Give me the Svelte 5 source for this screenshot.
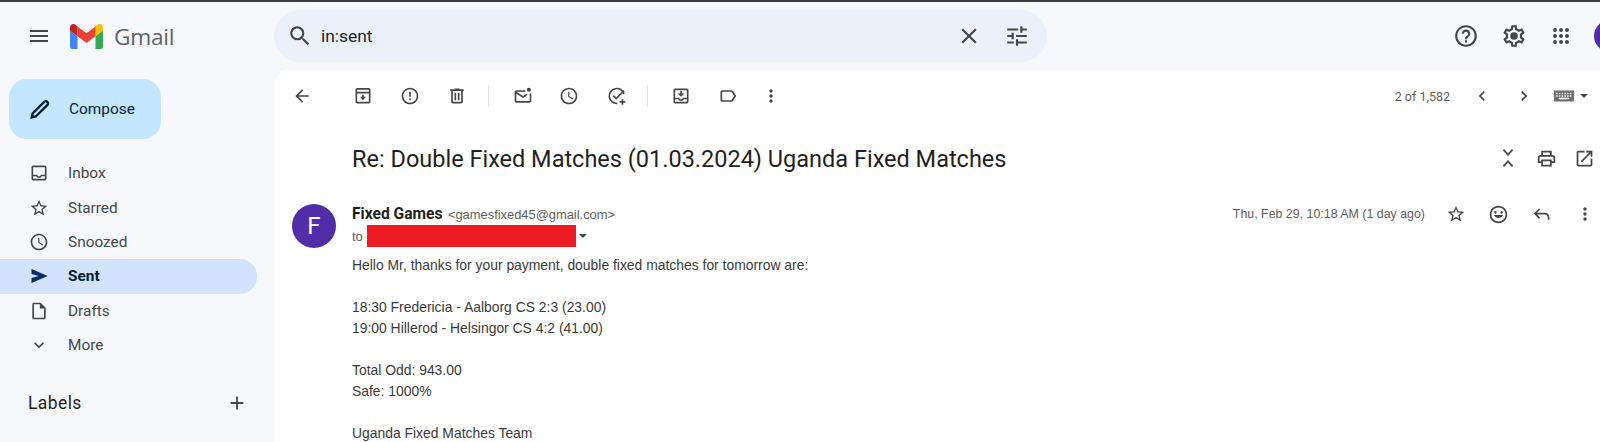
<script>
  const paths = {
    menu: "M3 18h18v-2H3v2zm0-5h18v-2H3v2zm0-7v2h18V6H3z",
    search: "M15.5 14h-.79l-.28-.27C15.41 12.59 16 11.11 16 9.5 16 5.91 13.09 3 9.5 3S3 5.91 3 9.5 5.91 16 9.5 16c1.61 0 3.09-.59 4.23-1.57l.27.28v.79l5 4.99L20.49 19l-4.99-5zm-6 0C7.01 14 5 11.99 5 9.5S7.01 5 9.5 5 14 7.01 14 9.5 11.99 14 9.5 14z",
    close: "M19 6.41L17.59 5 12 10.59 6.41 5 5 6.41 10.59 12 5 17.59 6.41 19 12 13.41 17.59 19 19 17.59 13.41 12z",
    tune: "M3 17v2h6v-2H3zM3 5v2h10V5H3zm10 16v-2h8v-2h-8v-2h-2v6h2zM7 9v2H3v2h4v2h2V9H7zm14 4v-2H11v2h10zm-6-4h2V7h4V5h-4V3h-2v6z",
    help: "M11 18h2v-2h-2v2zm1-16C6.48 2 2 6.48 2 12s4.48 10 10 10 10-4.48 10-10S17.52 2 12 2zm0 18c-4.41 0-8-3.59-8-8s3.59-8 8-8 8 3.59 8 8-3.59 8-8 8zm0-14c-2.21 0-4 1.79-4 4h2c0-1.1.9-2 2-2s2 .9 2 2c0 2-3 1.75-3 5h2c0-2.25 3-2.5 3-5 0-2.21-1.79-4-4-4z",
    gear: "M19.43 12.98c.04-.32.07-.64.07-.98 0-.34-.03-.66-.07-.98l2.11-1.65c.19-.15.24-.42.12-.64l-2-3.46c-.09-.16-.26-.25-.44-.25-.06 0-.12.01-.17.03l-2.49 1c-.52-.4-1.08-.73-1.69-.98l-.38-2.65C14.46 2.18 14.25 2 14 2h-4c-.25 0-.46.18-.49.42l-.38 2.65c-.61.25-1.17.59-1.69.98l-2.49-1c-.06-.02-.12-.03-.18-.03-.17 0-.34.09-.43.25l-2 3.46c-.13.22-.07.49.12.64l2.11 1.65c-.04.32-.07.65-.07.98 0 .33.03.66.07.98l-2.11 1.65c-.19.15-.24.42-.12.64l2 3.46c.09.16.26.25.44.25.06 0 .12-.01.17-.03l2.49-1c.52.4 1.08.73 1.69.98l.38 2.65c.03.24.24.42.49.42h4c.25 0 .46-.18.49-.42l.38-2.65c.61-.25 1.17-.59 1.69-.98l2.49 1c.06.02.12.03.18.03.17 0 .34-.09.43-.25l2-3.46c.12-.22.07-.49-.12-.64l-2.11-1.65zm-1.98-1.71c.04.31.05.52.05.73 0 .21-.02.43-.05.73l-.14 1.13.89.7 1.08.84-.7 1.21-1.27-.51-1.04-.42-.9.68c-.43.32-.84.56-1.25.73l-1.06.43-.16 1.13-.2 1.35h-1.4l-.19-1.35-.16-1.13-1.06-.43c-.43-.18-.83-.41-1.23-.71l-.91-.7-1.06.43-1.27.51-.7-1.21 1.08-.84.89-.7-.14-1.13c-.03-.31-.05-.54-.05-.74s.02-.43.05-.73l.14-1.13-.89-.7-1.08-.84.7-1.21 1.27.51 1.04.42.9-.68c.43-.32.84-.56 1.25-.73l1.06-.43.16-1.13.2-1.35h1.39l.19 1.35.16 1.13 1.06.43c.43.18.83.41 1.23.71l.91.7 1.06-.43 1.27-.51.7 1.21-1.07.85-.89.7.14 1.13z M12 8.5a3.5 3.5 0 1 0 0 7 3.5 3.5 0 0 0 0-7z",
    apps: "M4 6a2 2 0 1 0 4 0 2 2 0 0 0-4 0zm6 0a2 2 0 1 0 4 0 2 2 0 0 0-4 0zm6 0a2 2 0 1 0 4 0 2 2 0 0 0-4 0zM4 12a2 2 0 1 0 4 0 2 2 0 0 0-4 0zm6 0a2 2 0 1 0 4 0 2 2 0 0 0-4 0zm6 0a2 2 0 1 0 4 0 2 2 0 0 0-4 0zM4 18a2 2 0 1 0 4 0 2 2 0 0 0-4 0zm6 0a2 2 0 1 0 4 0 2 2 0 0 0-4 0zm6 0a2 2 0 1 0 4 0 2 2 0 0 0-4 0z",
    inbox: "M19 3H5c-1.1 0-2 .9-2 2v14c0 1.1.9 2 2 2h14c1.1 0 2-.9 2-2V5c0-1.1-.9-2-2-2zm0 16H5v-3h3.56c.69 1.19 1.97 2 3.44 2s2.75-.81 3.44-2H19v3zm0-5h-4.99c0 1.1-.9 2-2 2s-2-.9-2-2H5V5h14v9z",
    star: "M22 9.24l-7.19-.62L12 2 9.19 8.63 2 9.24l5.46 4.73L5.82 21 12 17.27 18.18 21l-1.63-7.03L22 9.24zM12 15.4l-3.76 2.27 1-4.28-3.32-2.88 4.38-.38L12 6.1l1.71 4.04 4.38.38-3.32 2.88 1 4.28L12 15.4z",
    clock: "M11.99 2C6.47 2 2 6.48 2 12s4.47 10 9.99 10C17.52 22 22 17.52 22 12S17.52 2 11.99 2zM12 20c-4.42 0-8-3.58-8-8s3.58-8 8-8 8 3.58 8 8-3.58 8-8 8zm.5-13H11v6l5.25 3.15.75-1.23-4.5-2.67z",
    send: "M3 20.5v-6L11.5 12 3 9.5v-6L22.5 12z",
    draft: "M14 2H6c-1.1 0-1.99.9-1.99 2L4 20c0 1.1.89 2 1.99 2H18c1.1 0 2-.9 2-2V8l-6-6zM6 20V4h7v5h5v11H6z",
    more: "M16.59 8.59L12 13.17 7.41 8.59 6 10l6 6 6-6z",
    add: "M19 13h-6v6h-2v-6H5v-2h6V5h2v6h6v2z",
    back: "M20 11H7.83l5.59-5.59L12 4l-8 8 8 8 1.41-1.41L7.83 13H20v-2z",
    archive: "M5 2.5h14c1.1 0 2 .9 2 2V19c0 1.1-.9 2-2 2H5c-1.1 0-2-.9-2-2V4.5c0-1.1.9-2 2-2zm0 2V7h14V4.5H5zM5 9v10h14V9H5zm6 1.5h2V13h2.5L12 17l-3.5-4H11z",
    spam: "M11 15h2v2h-2zm0-8h2v6h-2zm.99-5C6.47 2 2 6.48 2 12s4.47 10 9.99 10C17.52 22 22 17.52 22 12S17.52 2 11.99 2zM12 20c-4.42 0-8-3.58-8-8s3.58-8 8-8 8 3.58 8 8-3.58 8-8 8z",
    trash: "M15 4V3H9v1H4v2h1v13c0 1.1.9 2 2 2h10c1.1 0 2-.9 2-2V6h1V4h-5zm2 15H7V6h10v13zM9 8h2v9H9zm4 0h2v9h-2z",
    unread: "M20 9v9H4V7h11V5H4c-1.1 0-2 .9-2 2v11c0 1.1.9 2 2 2h16c1.1 0 2-.9 2-2V9h-2zM4 7l8 5 5-3.1v2.3L12 14.4 4 9.4zM19 2a2.5 2.5 0 1 0 0 5 2.5 2.5 0 0 0 0-5z",
    move: "M19 3H5c-1.1 0-2 .9-2 2v14c0 1.1.9 2 2 2h14c1.1 0 2-.9 2-2V5c0-1.1-.9-2-2-2zm0 16H5v-3h3.56c.69 1.19 1.97 2 3.44 2s2.75-.81 3.44-2H19v3zm0-5h-4.99c0 1.1-.9 2-2 2s-2-.9-2-2H5V5h14v9zM11 6h2v3h3l-4 4-4-4h3z",
    label: "M17.63 5.84C17.27 5.33 16.67 5 16 5L5 5.01C3.9 5.01 3 5.9 3 7v10c0 1.1.9 1.99 2 1.99L16 19c.67 0 1.27-.33 1.63-.84L22 12l-4.37-6.16zM16 17H5V7h11l3.55 5L16 17z",
    dots: "M12 8c1.1 0 2-.9 2-2s-.9-2-2-2-2 .9-2 2 .9 2 2 2zm0 2c-1.1 0-2 .9-2 2s.9 2 2 2 2-.9 2-2-.9-2-2-2zm0 6c-1.1 0-2 .9-2 2s.9 2 2 2 2-.9 2-2-.9-2-2-2z",
    left: "M15.41 7.41L14 6l-6 6 6 6 1.41-1.41L10.83 12z",
    right: "M10 6L8.59 7.41 13.17 12l-4.58 4.59L10 18l6-6z",
    keyboard: "M1 6h22v12H1zM3.5 8.5v1.5h1.5V8.5zm3 0v1.5H8V8.5zm3 0v1.5H11V8.5zm3 0v1.5H14V8.5zm3 0v1.5H17V8.5zm3 0v1.5h1.5V8.5zM3.5 11.2v1.5h1.5v-1.5zm3 0v1.5H8v-1.5zm3 0v1.5H11v-1.5zm3 0v1.5H14v-1.5zm3 0v1.5H17v-1.5zm3 0v1.5h1.5v-1.5zM6.5 14v1.5h11V14z",
    print: "M19 8h-1V3H6v5H5c-1.66 0-3 1.34-3 3v6h4v4h12v-4h4v-6c0-1.66-1.34-3-3-3zM8 5h8v3H8V5zm8 12v2H8v-4h8v2zm2-2v-2H6v2H4v-4c0-.55.45-1 1-1h14c.55 0 1 .45 1 1v4h-2z",
    open: "M19 19H5V5h7V3H5c-1.11 0-2 .9-2 2v14c0 1.1.89 2 2 2h14c1.1 0 2-.9 2-2v-7h-2v7zM14 3v2h3.59l-9.83 9.83 1.41 1.41L19 6.41V10h2V3h-7z",
    smile: "M15.5 11c.83 0 1.5-.67 1.5-1.5S16.33 8 15.5 8 14 8.67 14 9.5s.67 1.5 1.5 1.5zm-7 0c.83 0 1.5-.67 1.5-1.5S9.33 8 8.5 8 7 8.67 7 9.5 7.67 11 8.5 11zm3.49-9C6.47 2 2 6.48 2 12s4.47 10 9.99 10C17.52 22 22 17.52 22 12S17.52 2 11.99 2zM12 20c-4.42 0-8-3.58-8-8s3.58-8 8-8 8 3.58 8 8-3.58 8-8 8zm0-4c-2.33 0-4.31-1.46-5.11-3.5h10.22c-.8 2.04-2.78 3.5-5.11 3.5z",
  };

  // these read better as open strokes than as filled outlines
  const strokes = {
    pencil: "M3.8 20.4l.9-4L16.4 4.7a1.9 1.9 0 0 1 2.7 0l.4.4a1.9 1.9 0 0 1 0 2.7L7.8 19.5z",
    task: "M20.4 9.5A9 9 0 1 0 12.5 21M7.5 11.5l3.5 3.5 9.5-9.5M15 19h7M18.5 15.5v7",
    collapse: "M6.5 2l5.5 6 5.5-6M6.5 22l5.5-6 5.5 6",
    reply: "M9 6l-5.5 5.5L9 17M4 11.5h10.5c3 0 5.5 2 5.5 5.5v2",
  };

  const nav = [
    { name: "Inbox", icon: "inbox" },
    { name: "Starred", icon: "star" },
    { name: "Snoozed", icon: "clock" },
    { name: "Sent", icon: "send", active: true },
    { name: "Drafts", icon: "draft" },
    { name: "More", icon: "more" },
  ];

  const body = [
    "Hello Mr, thanks for your payment, double fixed matches for tomorrow are:",
    "",
    "18:30 Fredericia - Aalborg CS 2:3 (23.00)",
    "19:00 Hillerod - Helsingor CS 4:2 (41.00)",
    "",
    "Total Odd: 943.00",
    "Safe: 1000%",
    "",
    "Uganda Fixed Matches Team",
  ];
</script>

{#snippet icon(name, size = 24)}
  <svg class="icon" viewBox="0 0 24 24" width={size} height={size}>
    {#if strokes[name]}
      <path d={strokes[name]} class="stroked" />
    {:else}
      <path d={paths[name]} fill-rule="evenodd" />
    {/if}
  </svg>
{/snippet}

{#snippet tool(name, width, size = 20)}
  <div class="tool" style="width: {width}px">{@render icon(name, size)}</div>
{/snippet}

<div class="page">
  <header class="header">
    <div class="brand">
      <div class="menu-icon">{@render icon("menu", 24)}</div>
      <svg class="logo" viewBox="52 42 88 66" width="33" height="25">
        <path fill="#4285f4" d="M58 108h14V74L52 59v43c0 3.32 2.69 6 6 6" />
        <path fill="#34a853" d="M120 108h14c3.32 0 6-2.69 6-6V59l-20 15" />
        <path fill="#fbbc04" d="M120 48v26l20-15v-8c0-7.42-8.47-11.65-14.4-7.2" />
        <path fill="#ea4335" d="M72 74V48l24 18 24-18v26L96 92" />
        <path fill="#c5221f" d="M52 51v8l20 15V48l-5.6-4.2c-5.94-4.45-14.4-.22-14.4 7.2" />
      </svg>
      <span class="wordmark">Gmail</span>
    </div>
    <div class="search">
      <div class="search-icon">{@render icon("search", 26)}</div>
      <span class="query">in:sent</span>
      <div class="search-end">
        {@render icon("close", 26)}
        {@render icon("tune", 26)}
      </div>
    </div>
    <div class="actions">
      {@render icon("help", 26)}
      {@render icon("gear", 26)}
      {@render icon("apps", 24)}
      <div class="me"></div>
    </div>
  </header>

  <div class="main">
    <aside class="sidebar">
      <button class="compose">
        {@render icon("pencil", 24)}
        <span>Compose</span>
      </button>
      <nav class="nav">
        {#each nav as item}
          <div class="nav-row" class:active={item.active}>
            {@render icon(item.icon, 20)}
            <span>{item.name}</span>
          </div>
        {/each}
      </nav>
      <div class="labels">
        <span>Labels</span>
        {@render icon("add", 22)}
      </div>
    </aside>

    <section class="panel">
      <div class="toolbar">
        {@render tool("back", 56)}
        <div class="gap-a"></div>
        {@render tool("archive", 46)}
        {@render tool("spam", 48)}
        {@render tool("trash", 46)}
        <div class="sep"></div>
        {@render tool("unread", 49)}
        {@render tool("clock", 44)}
        {@render tool("task", 52)}
        <div class="sep tight"></div>
        {@render tool("move", 47)}
        {@render tool("label", 47)}
        {@render tool("dots", 40)}
        <div class="pager">
          <span class="count">2 of 1,582</span>
          {@render tool("left", 42)}
          {@render tool("right", 42)}
          <div class="kbd">
            {@render icon("keyboard", 22)}
            <i class="caret"></i>
          </div>
        </div>
      </div>

      <div class="subject-row">
        <h1>Re: Double Fixed Matches (01.03.2024) Uganda Fixed Matches</h1>
        <div class="subject-tools">
          {@render tool("collapse", 38)}
          {@render tool("print", 38, 21)}
          {@render tool("open", 38, 21)}
        </div>
      </div>

      <div class="message">
        <div class="avatar">F</div>
        <div class="content">
          <div class="meta">
            <div>
              <span class="sender">Fixed Games</span>
              <span class="address">&lt;gamesfixed45@gmail.com&gt;</span>
            </div>
            <div class="meta-end">
              <span class="date">Thu, Feb 29, 10:18 AM (1 day ago)</span>
              {@render tool("star", 43)}
              {@render tool("smile", 43, 21)}
              {@render tool("reply", 43)}
              {@render tool("dots", 43)}
            </div>
          </div>
          <div class="to">
            <span>to</span>
            <span class="redact"></span>
            <i class="caret small"></i>
          </div>
          <div class="body">
            {#each body as line}
              <div class="line">{line}</div>
            {/each}
          </div>
        </div>
      </div>
    </section>
  </div>
</div>

<style>
  :global(body) {
    background: #f6f8fc;
  }

  .page {
    height: 442px;
    overflow: hidden;
    border-top: 2px solid #3c3c3c;
    box-sizing: border-box;
    background: #f6f8fc;
    font-family: Roboto, "Liberation Sans", sans-serif;
    color: #444746;
  }

  .icon {
    display: block;
    flex: none;
    fill: #444746;
  }

  .stroked {
    fill: none;
    stroke: #444746;
    stroke-width: 2;
  }

  .header {
    height: 68px;
    display: flex;
    align-items: center;
  }

  .brand {
    width: 274px;
    flex: none;
    display: flex;
    align-items: center;
    padding-left: 27px;
    box-sizing: border-box;
  }

  .logo {
    margin-left: 19px;
  }

  .wordmark {
    margin-left: 11px;
    font-family: "Open Sans", sans-serif;
    font-size: 22.7px;
    color: #5f6368;
    letter-spacing: -0.3px;
  }

  .search {
    width: 773px;
    height: 52px;
    margin-top: -1px;
    flex: none;
    background: #eaf1fb;
    border-radius: 26px;
    display: flex;
    align-items: center;
    padding: 0 17px 0 13px;
    box-sizing: border-box;
  }

  .query {
    margin-left: 8px;
    font-size: 17.4px;
    color: #1f1f1f;
  }

  .search-end {
    margin-left: auto;
    display: flex;
    align-items: center;
    gap: 22px;
  }

  .actions {
    margin-left: auto;
    display: flex;
    align-items: center;
    gap: 22px;
    margin-right: -26px;
  }

  .me {
    width: 32px;
    height: 32px;
    border-radius: 50%;
    background: #4f2da7;
    margin-left: -1px;
  }

  .main {
    display: flex;
    height: 372px;
  }

  .sidebar {
    width: 274px;
    flex: none;
  }

  .compose {
    width: 152px;
    height: 60px;
    margin: 9px 0 0 9px;
    background: #c2e7ff;
    border: 0;
    border-radius: 18px;
    display: flex;
    align-items: center;
    padding: 0 0 0 19px;
    gap: 17px;
    font-family: inherit;
    font-size: 15.4px;
    color: #001d35;
  }

  .compose .stroked {
    stroke: #001d35;
    stroke-width: 2.4;
  }

  .nav {
    margin-top: 17px;
    width: 257px;
  }

  .nav-row {
    height: 34.4px;
    display: flex;
    align-items: center;
    padding-left: 29px;
    gap: 19px;
    font-size: 15.4px;
    border-radius: 0 17px 17px 0;
  }

  .nav-row.active {
    background: #d3e3fd;
    color: #001d35;
    font-weight: 700;
  }

  .nav-row.active .icon {
    fill: #0b2f5e;
  }

  .labels {
    margin-top: 30px;
    display: flex;
    align-items: center;
    justify-content: space-between;
    width: 248px;
    padding-left: 28px;
    font-size: 17.5px;
    letter-spacing: 0.4px;
    color: #1f1f1f;
    box-sizing: border-box;
  }

  .panel {
    flex: 1;
    background: #fff;
    border-radius: 16px 0 0 0;
    overflow: hidden;
    min-width: 0;
  }

  .tool {
    flex: none;
    display: flex;
    justify-content: center;
    align-items: center;
  }

  .toolbar {
    height: 52px;
    display: flex;
    align-items: center;
  }

  .gap-a {
    width: 10px;
    flex: none;
  }

  .sep {
    width: 1px;
    height: 22px;
    margin: 0 9px 0 8px;
    background: #e3e5e8;
    flex: none;
  }

  .sep.tight {
    margin-left: 4px;
  }

  .pager {
    margin-left: auto;
    margin-right: 5px;
    display: flex;
    align-items: center;
    font-size: 12.5px;
    color: #5e5e5e;
  }

  .count {
    margin-right: 11px;
  }

  .kbd {
    display: flex;
    align-items: center;
    gap: 5px;
    width: 50px;
    padding-left: 8px;
    box-sizing: border-box;
  }

  .kbd .icon {
    fill: #6f6f6f;
  }

  .caret {
    width: 0;
    height: 0;
    border: 4px solid transparent;
    border-top-color: #444746;
    border-bottom: 0;
  }

  .subject-row {
    display: flex;
    align-items: center;
    justify-content: space-between;
    height: 40px;
    margin-top: 16px;
    padding-left: 78px;
  }

  h1 {
    margin: 2px 0 0;
    font-weight: 400;
    font-size: 23.5px;
    color: #1f1f1f;
    white-space: nowrap;
  }

  .subject-tools {
    display: flex;
    margin-right: -3px;
  }

  .message {
    display: flex;
    margin-top: 26px;
    padding-left: 18px;
    margin-right: -6px;
  }

  .avatar {
    width: 44px;
    height: 44px;
    flex: none;
    border-radius: 50%;
    background: #512da8;
    color: #fff;
    font-size: 24px;
    display: flex;
    align-items: center;
    justify-content: center;
  }

  .content {
    flex: 1;
    min-width: 0;
    margin-left: 16px;
    font-family: "Liberation Sans", Arial, sans-serif;
  }

  .meta {
    display: flex;
    justify-content: space-between;
    align-items: center;
    height: 20px;
  }

  .sender {
    font-family: Roboto, sans-serif;
    font-weight: 700;
    font-size: 15.6px;
    color: #1f1f1f;
  }

  .address {
    margin-left: 1px;
    font-size: 12.9px;
    color: #5e5e5e;
  }

  .meta-end {
    display: flex;
    align-items: center;
  }

  .date {
    font-size: 12.4px;
    color: #5e5e5e;
    margin-right: 9px;
  }

  .to {
    display: flex;
    align-items: center;
    height: 22px;
    font-size: 13px;
    color: #5e5e5e;
    margin-top: 1px;
  }

  .redact {
    width: 209px;
    height: 22px;
    background: #ed1c24;
    margin-left: 4px;
    margin-right: 3px;
  }

  .body {
    margin-top: 8px;
    font-size: 13.9px;
    color: #3a3a3a;
  }

  .line {
    height: 21px;
    line-height: 21px;
  }
</style>
